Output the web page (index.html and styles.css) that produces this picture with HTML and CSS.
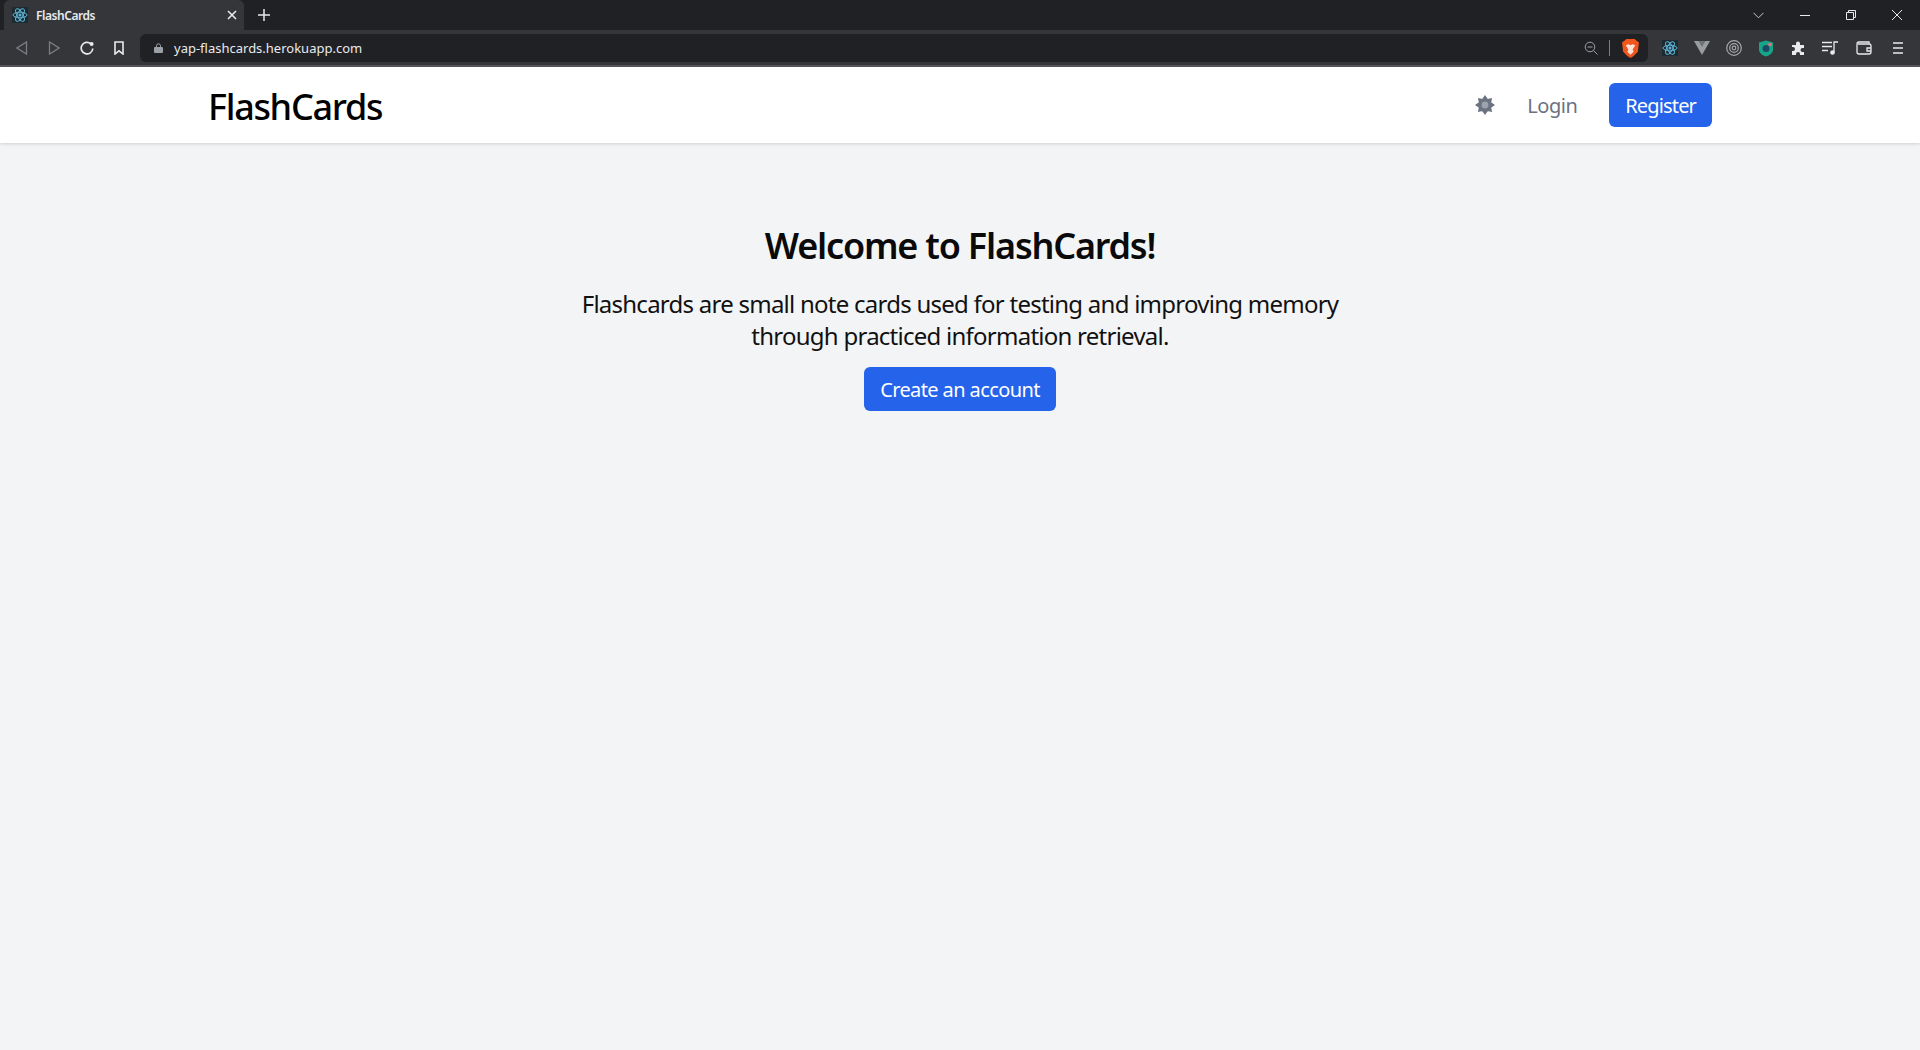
FILE: index.html
```html
<!DOCTYPE html>
<html lang="en">
<head>
    <meta charset="UTF-8">
    <title>FlashCards</title>
    <link rel="stylesheet" href="styles.css">
</head>
<body>

    <!-- Browser tab strip -->
    <div class="tab-strip">
        <div class="tab">
            <svg class="react-icon" width="16" height="16" viewBox="0 0 16 16">
                <rect width="16" height="16" fill="#1c2b33"/>
                <g fill="none" stroke="#61b5d3" stroke-width="1">
                    <ellipse cx="8" cy="8" rx="7" ry="2.8"/>
                    <ellipse cx="8" cy="8" rx="7" ry="2.8" transform="rotate(60 8 8)"/>
                    <ellipse cx="8" cy="8" rx="7" ry="2.8" transform="rotate(120 8 8)"/>
                </g>
                <circle cx="8" cy="8" r="1.5" fill="#61b5d3"/>
            </svg>
            <span class="tab-title">FlashCards</span>
            <svg class="tab-close" width="10" height="10" viewBox="0 0 10 10">
                <path d="M1 1l8 8M9 1l-8 8" stroke="#e8eaed" stroke-width="1.6"/>
            </svg>
        </div>
        <svg class="new-tab" width="12" height="12" viewBox="0 0 12 12">
            <path d="M6 0v12M0 6h12" stroke="#e8eaed" stroke-width="1.5"/>
        </svg>
        <div class="window-controls">
            <svg width="11" height="7" viewBox="0 0 11 7">
                <path d="M.5.8l5 5 5-5" fill="none" stroke="#c4c7c9" stroke-width="1"/>
            </svg>
            <svg width="10" height="10" viewBox="0 0 10 10">
                <path d="M0 5.500h10" stroke="#e8eaed" stroke-width="1"/>
            </svg>
            <svg width="10" height="10" viewBox="0 0 10 10">
                <path d="M.5 2.500h7v7h-7zM2.500 2.500v-2h7v7h-2" fill="none" stroke="#e8eaed" stroke-width="1"/>
            </svg>
            <svg width="10" height="10" viewBox="0 0 10 10">
                <path d="M0 0l10 10M10 0L0 10" stroke="#e8eaed" stroke-width="1"/>
            </svg>
        </div>
    </div>

    <!-- Browser toolbar -->
    <div class="toolbar">
        <div class="nav-buttons">
            <svg width="12" height="14" viewBox="0 0 12 14"><path d="M10.500 1v12L1 7z" fill="none" stroke="#7b7e82" stroke-width="1.300"/></svg>
            <svg width="12" height="14" viewBox="0 0 12 14"><path d="M1.500 1v12L11 7z" fill="none" stroke="#7b7e82" stroke-width="1.300"/></svg>
            <svg width="14" height="14" viewBox="0 0 14 14">
                <path d="M10.800 2.700A5.800 5.800 0 1 0 12.800 7.500" fill="none" stroke="#e8eaed" stroke-width="1.700"/>
                <circle cx="11.600" cy="3" r="2" fill="#e8eaed"/>
            </svg>
            <svg width="10" height="14" viewBox="0 0 10 14"><path d="M1 1h8v12L5 9.800 1 13z" fill="none" stroke="#e8eaed" stroke-width="1.600"/></svg>
        </div>
        <div class="address-bar">
            <svg class="lock" width="9" height="10" viewBox="0 0 9 10">
                <path d="M2.500 4V2.800a2 2 0 0 1 4 0V4" fill="none" stroke="#9aa0a6" stroke-width="1"/>
                <rect y="4" width="9" height="6" rx="1" fill="#9aa0a6"/>
            </svg>
            <span class="url">yap-flashcards.herokuapp.com</span>
            <svg class="zoom-out" width="14" height="14" viewBox="0 0 14 14">
                <circle cx="6" cy="6" r="4.800" fill="none" stroke="#9aa0a6" stroke-width="1"/>
                <path d="M9.500 9.500l4 4M3.500 6h5" stroke="#9aa0a6" stroke-width="1"/>
            </svg>
            <span class="bar-divider"></span>
            <svg class="brave" width="17" height="19" viewBox="0 0 16 18">
                <path d="M4 0h8l2 2 2 1-1 9-4 4-3 2-3-2-4-4L0 3l2-1z" fill="#f1561f"/>
                <path d="M3.500 6L6 5l2 1 2-1 2.500 1L10 10l1 2-3 3-3-3 1-2z" fill="#fbe3d8"/>
            </svg>
        </div>
        <div class="extensions">
            <div class="ext-slot">
                <svg width="16" height="16" viewBox="0 0 16 16">
                    <rect width="16" height="16" fill="#1c2b33"/>
                    <g fill="none" stroke="#61b5d3" stroke-width="1">
                        <ellipse cx="8" cy="8" rx="7" ry="2.800"/>
                        <ellipse cx="8" cy="8" rx="7" ry="2.800" transform="rotate(60 8 8)"/>
                        <ellipse cx="8" cy="8" rx="7" ry="2.800" transform="rotate(120 8 8)"/>
                    </g>
                    <circle cx="8" cy="8" r="1.500" fill="#61b5d3"/>
                </svg>
            </div>
            <div class="ext-slot">
                <svg width="16" height="14" viewBox="0 0 16 14">
                    <path d="M0 0h16L8 14z" fill="#9a9da0"/>
                    <path d="M4.500 0h7L8 6z" fill="#6f7275"/>
                </svg>
            </div>
            <div class="ext-slot">
                <svg width="16" height="16" viewBox="0 0 16 16" fill="none" stroke="#a4a7aa">
                    <circle cx="8" cy="8" r="7.300" stroke-width="1.200"/>
                    <circle cx="8" cy="8" r="4.300" stroke-width="1.200"/>
                    <circle cx="8" cy="8" r="1.800" stroke-width="1.200"/>
                </svg>
            </div>
            <div class="ext-slot">
                <svg width="14" height="17" viewBox="0 0 14 16">
                    <path d="M7 0l7 2v7c0 3.500-3.500 6-7 7-3.500-1-7-3.500-7-7V2z" fill="#17a589"/>
                    <circle cx="7" cy="8" r="3.500" fill="#1d4a63"/>
                    <circle cx="11" cy="4" r="1.800" fill="#e57373"/>
                </svg>
            </div>
            <div class="ext-slot">
                <svg width="15" height="15" viewBox="0 0 15 15">
                    <path d="M5 2.500a2 2 0 0 1 4 0V4h4v3h-1.500a2 2 0 0 0 0 4H13v3H9v-1a2 2 0 0 0-4 0v1H1v-4h1a2 2 0 0 0 0-4H1V4h4z" fill="#e8eaed"/>
                </svg>
            </div>
            <div class="ext-slot">
                <svg width="16" height="14" viewBox="0 0 16 14">
                    <path d="M0 1.500h10M0 5.500h10M0 9.500h6" stroke="#e8eaed" stroke-width="1.300"/>
                    <path d="M12 11V1h4" fill="none" stroke="#e8eaed" stroke-width="1.300"/>
                    <circle cx="10.500" cy="11.500" r="2.300" fill="#e8eaed"/>
                </svg>
            </div>
            <div class="ext-slot ext-shifted">
                <svg width="16" height="14" viewBox="0 0 16 14" fill="none" stroke="#e8eaed" stroke-width="1.300">
                    <path d="M13 3V1H3a2 2 0 0 0-2 2v8a2 2 0 0 0 2 2h10a2 2 0 0 0 2-2V5a2 2 0 0 0-2-2H2"/>
                    <path d="M15 7h-4v3h4"/>
                </svg>
            </div>
            <div class="ext-slot ext-shifted">
                <svg width="10" height="12" viewBox="0 0 10 12">
                    <path d="M0 1h10M0 6h10M0 11h10" stroke="#e8eaed" stroke-width="1.400"/>
                </svg>
            </div>
        </div>
    </div>

    <!-- Header Section -->
    <header class="site-header">
        <div class="header-inner">
            <a class="brand" href="#">FlashCards</a>
            <nav class="header-nav">
                <svg class="theme-icon" width="20" height="20" viewBox="0 0 20 20">
                    <g fill="#6b7280">
                        <path d="M10 0l2.800 4h-5.600zM10 20l-2.800-4h5.600zM0 10l4-2.800v5.600zM20 10l-4 2.800V7.200zM2.900 2.900l4.800 1-3.800 3.800zM17.100 17.100l-4.800-1 3.800-3.800zM17.100 2.900l-1 4.800-3.800-3.800zM2.900 17.100l1-4.800 3.800 3.800z"/>
                    </g>
                    <circle cx="10" cy="10" r="5" fill="#9ca3af" stroke="#6b7280" stroke-width="3.200"/>
                </svg>
                <a class="login-link" href="#">Login</a>
                <a class="btn btn-register" href="#">Register</a>
            </nav>
        </div>
    </header>

    <!-- Welcome Section -->
    <main class="welcome">
        <h1>Welcome to FlashCards!</h1>
        <p>Flashcards are small note cards used for testing and improving memory through practiced information retrieval.</p>
        <a class="btn" href="#">Create an account</a>
    </main>

</body>
</html>
```

FILE: styles.css
```css
body {
    font-family: "Noto Sans", "Open Sans", sans-serif;
    background-color: #f3f4f6;
    margin: 0;
    padding: 0;
    height: 1050px;
    overflow: hidden;
}

a {
    text-decoration: none;
}

/* Browser tab strip */
.tab-strip {
    display: flex;
    align-items: center;
    height: 30px;
    background-color: #1f2125;
}

.tab {
    display: flex;
    align-items: center;
    width: 240px;
    height: 30px;
    margin-left: 4px;
    padding: 0 7px 0 8px;
    box-sizing: border-box;
    background-color: #35363a;
    border-radius: 6px 6px 0 0;
}

.tab-title {
    flex: 1;
    margin-left: 8px;
    color: #e8eaed;
    font-size: 12px;
    font-weight: 600;
    letter-spacing: -0.45px;
}

.new-tab {
    margin-left: 14px;
}

.window-controls {
    display: flex;
    align-items: center;
    margin-left: auto;
    padding-right: 18px;
    gap: 36px;
}

/* Browser toolbar */
.toolbar {
    display: flex;
    align-items: center;
    height: 34px;
    padding-top: 1px;
    background-color: #35363a;
    border-bottom: 2px solid #55565a;
}

.nav-buttons {
    display: flex;
    align-items: center;
    gap: 20px;
    width: 140px;
    padding-left: 16px;
    box-sizing: border-box;
}

.address-bar {
    display: flex;
    align-items: center;
    flex: 1;
    height: 28px;
    padding: 0 9px 0 14px;
    background-color: #202124;
    border-radius: 6px;
}

.url {
    flex: 1;
    margin-left: 11px;
    color: #e8eaed;
    font-size: 13px;
}

.bar-divider {
    width: 1px;
    height: 16px;
    margin: 0 12px 0 11px;
    background-color: #7b7e82;
}

.extensions {
    display: flex;
    align-items: center;
    width: 272px;
    padding-left: 6px;
    box-sizing: border-box;
}

.ext-slot {
    display: flex;
    align-items: center;
    justify-content: center;
    width: 32px;
}

.ext-shifted {
    margin-left: 2px;
}

/* Site header */
.site-header {
    height: 76px;
    background-color: white;
    box-shadow: 0 1px 3px rgba(0, 0, 0, 0.15);
}

.header-inner {
    display: flex;
    align-items: center;
    justify-content: space-between;
    width: 1504px;
    height: 76px;
    margin: 0 auto;
}

.brand {
    padding-top: 2px;
    color: black;
    font-size: 36px;
    font-weight: 500;
    letter-spacing: -1.3px;
}

.header-nav {
    display: flex;
    align-items: center;
}

.login-link {
    margin: 0 32px;
    color: #6b7280;
    font-size: 20px;
    letter-spacing: -0.5px;
}

.btn {
    display: inline-block;
    padding: 8px 16px 6px;
    background-color: #2563eb;
    color: white;
    border-radius: 6px;
    font-size: 20px;
    line-height: 30px;
    letter-spacing: -0.6px;
}

.btn-register {
    letter-spacing: -0.85px;
}

/* Welcome section */
.welcome {
    text-align: center;
    padding-top: 78px;
}

.welcome h1 {
    margin: 0;
    font-size: 36px;
    font-weight: 600;
    line-height: 50px;
    letter-spacing: -1.2px;
    color: #0a0a0a;
}

.welcome p {
    width: 780px;
    margin: 17px auto 15px;
    font-size: 24px;
    line-height: 32px;
    letter-spacing: -0.75px;
    color: #111111;
}
```
